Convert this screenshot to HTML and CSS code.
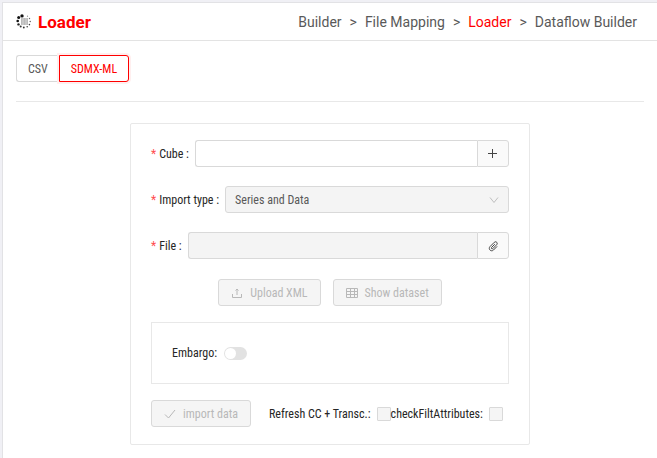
FILE: index.html
```html
<!DOCTYPE html>
<html lang="en">
<head>
<meta charset="utf-8">
<meta name="viewport" content="width=device-width, initial-scale=1">
<title>Loader</title>
<link rel="stylesheet" href="styles.css">
</head>
<body>
<div class="page">
  <header class="header">
    <h1 class="title">
      <svg class="logo" viewBox="0 0 16 16" aria-hidden="true">
        <rect x="5" y="4" width="7" height="7" fill="#c8c8c8"/>
        <path d="M5.5 4.5v6M8.5 4v7M11.5 4.5v6" stroke="#b4b4b4" stroke-width=".7"/>
        <circle cx="6" cy="1.9" r="1.7" fill="#111"/>
        <circle cx="2.7" cy="3.5" r="1.5" fill="#111"/>
        <circle cx="1.7" cy="7" r="1.3" fill="#111"/>
        <circle cx="2.5" cy="10.4" r="1.2" fill="#222"/>
        <circle cx="4.7" cy="12.5" r="1" fill="#333"/>
        <circle cx="7.8" cy="13.5" r=".9" fill="#333"/>
        <circle cx="11.2" cy="12.7" r=".8" fill="#444"/>
        <circle cx="13.4" cy="10.6" r=".8" fill="#444"/>
        <circle cx="14.2" cy="7.5" r=".7" fill="#555"/>
        <circle cx="13.5" cy="4.5" r=".7" fill="#666"/>
        <circle cx="11.5" cy="2.2" r=".6" fill="#888"/>
      </svg>
      Loader
    </h1>
    <nav class="crumbs" aria-label="Steps">
      <a href="#">Builder</a><span>&gt;</span><a href="#">File Mapping</a><span>&gt;</span><a href="#" class="current">Loader</a><span>&gt;</span><a href="#">Dataflow Builder</a>
    </nav>
  </header>
  <main class="main">
    <div class="tabs">
      <button type="button" class="tab">CSV</button><button type="button" class="tab active">SDMX-ML</button>
    </div>
    <form class="card">
      <div class="row">
        <label class="required" for="cube">Cube :</label>
        <div class="group">
          <input class="field" id="cube" type="text">
          <button type="button" class="addon" aria-label="Add cube">
            <svg class="icon" viewBox="0 0 12 12"><path d="M5.5 1v9M1 5.5h9"/></svg>
          </button>
        </div>
      </div>
      <div class="row">
        <label class="required" for="type">Import type :</label>
        <div class="picker">
          <select class="field" id="type" disabled><option>Series and Data</option></select>
          <svg class="icon chevron" viewBox="0 0 12 12"><path d="M2 3.5l4 5 4-5"/></svg>
        </div>
      </div>
      <div class="row">
        <label class="required" for="file">File :</label>
        <div class="group">
          <input class="field" id="file" type="text" disabled>
          <button type="button" class="addon" aria-label="Choose file">
            <svg class="icon" viewBox="0 0 12 12"><path d="M7.8 4.2L4.6 7.4c-.8.9.4 2 1.2 1.2l3.9-3.9c1.6-1.7-.8-4-2.4-2.4L3 6.6c-2.2 2.4 1.1 5.7 3.5 3.4l3.6-3.6"/></svg>
          </button>
        </div>
      </div>
      <div class="actions">
        <button type="button" class="button" disabled>
          <svg class="icon" viewBox="0 0 12 12"><path d="M1.5 7v3.5h9V7M6 8V2M4.5 3.5L6 2l1.5 1.5"/></svg>Upload XML
        </button>
        <button type="button" class="button" disabled>
          <svg class="icon" viewBox="0 0 12 12"><path d="M.5 1.5h11v9H.5zM.5 4.5h11M.5 7.5h11M4.5 1.5v9M8.5 1.5v9"/></svg>Show dataset
        </button>
      </div>
      <div class="embargo">
        <label for="embargo">Embargo:</label>
        <input class="switch" id="embargo" type="checkbox" role="switch">
      </div>
      <div class="footer">
        <button type="submit" class="button" disabled>
          <svg class="icon" viewBox="0 0 12 12"><path d="M1 6.5L4.5 10 11 2"/></svg>import data
        </button>
        <div class="checks">
          <label for="refresh">Refresh CC + Transc.:</label>
          <input class="check" id="refresh" type="checkbox" disabled>
          <label for="attributes">checkFiltAttributes:</label>
          <input class="check" id="attributes" type="checkbox" disabled>
        </div>
      </div>
    </form>
  </main>
</div>
</body>
</html>
```
FILE: styles.css
```css
* { box-sizing: border-box; }
body {
  margin: 0;
  padding: 2px 0 0 2px;
  background: #f0f0f5;
  color: #262626;
  font: 12px/18px "Roboto Condensed", Roboto, sans-serif;
}
.page {
  min-height: calc(100vh - 2px);
  border: solid #e2e2e5;
  border-width: 1px 0 0 1px;
  background: #fff;
}
.header {
  display: flex;
  justify-content: space-between;
  align-items: center;
  height: 38px;
  padding: 0 20px 0 13px;
  border-bottom: 1px solid #e3e3e3;
  font-family: Roboto, sans-serif;
}
.title {
  display: flex;
  align-items: center;
  gap: 6px;
  margin: 0;
  color: #f00;
  font-size: 17px;
  font-weight: 700;
  line-height: 24px;
}
.logo { width: 16px; height: 16px; }
.crumbs {
  display: flex;
  gap: 8px;
  font-size: 14px;
  line-height: 20px;
  color: #595959;
}
.crumbs a { color: inherit; text-decoration: none; }
.crumbs .current { color: #f00; }
.main { padding: 14px 13px; }
.tabs {
  display: flex;
  padding-bottom: 19px;
  margin-bottom: 21px;
  border-bottom: 1px solid #e8e8e8;
}
button, input, select { font: inherit; }
label { white-space: nowrap; }
.tab {
  height: 27px;
  padding: 0 11px;
  border: 1px solid #d9d9d9;
  border-right: 0;
  border-radius: 3px 0 0 3px;
  background: #fff;
  color: #595959;
}
.tab.active {
  border: 1px solid #f00;
  border-radius: 0 3px 3px 0;
  box-shadow: 0 0 0 2px #ffefef;
  color: #f00;
}
.card {
  max-width: 400px;
  margin: 0 auto;
  padding: 16px 20px 17px;
  border: 1px solid #e8e8e8;
  border-radius: 2px;
}
.row {
  display: flex;
  align-items: center;
  gap: 6px;
  margin-bottom: 19px;
}
.required::before {
  content: "*";
  margin-right: 3px;
  color: #ff4d4f;
}
.group, .picker { display: flex; flex: 1; }
.field {
  flex: 1;
  min-width: 0;
  height: 27px;
  padding: 0 9px;
  border: 1px solid #d9d9d9;
  border-radius: 3px;
  background: #fff;
  color: #595959;
  appearance: none;
}
.field:disabled { background: #f4f4f4; opacity: 1; }
.group .field { border-right: 0; border-radius: 3px 0 0 3px; }
.addon {
  display: grid;
  place-items: center;
  width: 32px;
  height: 27px;
  padding: 0;
  border: 1px solid #d9d9d9;
  border-radius: 0 3px 3px 0;
  background: #fafafa;
  color: #444;
}
.icon {
  width: 12px;
  height: 12px;
  fill: none;
  stroke: currentColor;
  stroke-width: 1;
}
.picker { position: relative; }
.chevron {
  position: absolute;
  right: 9px;
  top: 8px;
  color: #bfbfbf;
  pointer-events: none;
}
.actions {
  display: flex;
  justify-content: center;
  gap: 12px;
  margin: 20px 0 16px;
}
.row:has(+ .actions) { margin-bottom: 0; }
.button {
  display: flex;
  align-items: center;
  gap: 7px;
  height: 27px;
  padding: 0 12px;
  border: 1px solid #d9d9d9;
  border-radius: 3px;
  background: #f5f5f5;
  color: #b8b8b8;
}
.embargo {
  display: flex;
  align-items: center;
  gap: 7px;
  margin-bottom: 16px;
  padding: 21px 20px;
  border: 1px solid #e8e8e8;
}
.switch {
  display: flex;
  align-items: center;
  width: 23px;
  height: 13px;
  margin: 0;
  padding: 0 1px;
  border-radius: 7px;
  background: #e2e2e2;
  appearance: none;
}
.switch::before {
  content: "";
  width: 11px;
  height: 11px;
  border-radius: 50%;
  background: #fff;
}
.switch:checked { justify-content: flex-end; background: #f00; }
.footer {
  display: flex;
  align-items: center;
  gap: 18px;
}
.checks {
  display: flex;
  flex: 1;
  align-items: center;
}
.check {
  flex: none;
  width: 14px;
  height: 14px;
  margin: 0 0 0 6px;
  border: 1px solid #d9d9d9;
  border-radius: 1px;
  background: #f5f5f5;
  appearance: none;
}
```
